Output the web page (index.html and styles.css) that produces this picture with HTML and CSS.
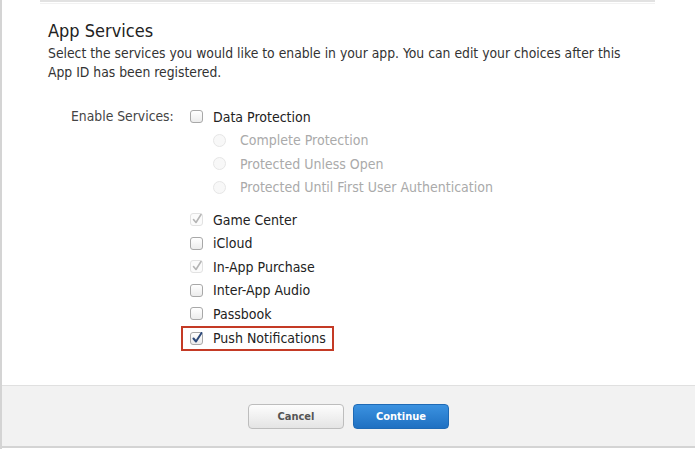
FILE: index.html
```html
<!DOCTYPE html>
<html lang="en">
<head>
    <meta charset="UTF-8">
    <title>App Services</title>
    <link rel="stylesheet" href="styles.css">
</head>
<body>
    <div class="panel">
        <div class="divider"></div>
        <div class="section">
            <h2 class="title">App Services</h2>
            <p class="intro">Select the services you would like to enable in your app. You can edit your choices after this App ID has been registered.</p>

            <div class="services">
                <div class="services-label">Enable Services:</div>
                <div class="options">
                    <div class="option"><span class="box"></span>Data Protection</div>
                    <div class="option sub"><span class="radio"></span>Complete Protection</div>
                    <div class="option sub"><span class="radio"></span>Protected Unless Open</div>
                    <div class="option sub"><span class="radio"></span>Protected Until First User Authentication</div>

                    <div class="option spaced"><span class="box locked"><svg viewBox="0 0 12 12"><path d="M2.5 6.5 L5 9.5 L10 1.5" /></svg></span>Game Center</div>
                    <div class="option"><span class="box"></span>iCloud</div>
                    <div class="option"><span class="box locked"><svg viewBox="0 0 12 12"><path d="M2.5 6.5 L5 9.5 L10 1.5" /></svg></span>In-App Purchase</div>
                    <div class="option"><span class="box"></span>Inter-App Audio</div>
                    <div class="option"><span class="box"></span>Passbook</div>
                    <div class="option highlight"><span class="box checked"><svg viewBox="0 0 12 12"><path d="M2.5 6.5 L5 9.5 L10.5 1" /></svg></span>Push Notifications</div>
                </div>
            </div>
        </div>
        <div class="footer">
            <button class="btn cancel">Cancel</button>
            <button class="btn continue">Continue</button>
        </div>
    </div>
</body>
</html>
```

FILE: styles.css
```css
body {
    margin: 0;
    background: #fff;
    font-family: "DejaVu Sans Condensed", "DejaVu Sans", sans-serif;
    color: #333;
}

.panel {
    height: 449px;
    border-left: 2px solid #d4d4d4;
    box-sizing: border-box;
    display: flex;
    flex-direction: column;
}

.divider {
    margin: 0 40px 0 38px;
    height: 1px;
    border-top: 2px solid #e2e2e2;
    border-bottom: 1px solid #f2f2f2;
}

.section {
    flex: 1;
    padding-left: 46px;
}

.title {
    margin: 15px 0 0;
    font-size: 18px;
    line-height: 24px;
    font-weight: normal;
    color: #222;
}

.intro {
    margin: 1px 0 0;
    width: 590px;
    font-size: 13.8px;
    line-height: 19px;
    color: #333;
}

.services {
    display: flex;
    margin-top: 23px;
    padding-left: 23px;
}

.services-label {
    width: 119px;
    font-size: 13.8px;
    line-height: 23.5px;
    color: #444;
}

.options {
    display: flex;
    flex-direction: column;
}

.option {
    display: flex;
    align-items: center;
    height: 23.5px;
    font-size: 14px;
    color: #222;
}

.option.sub {
    padding-left: 23px;
    color: #aaa;
}

.option.spaced {
    margin-top: 9px;
}

.box {
    width: 11px;
    height: 11px;
    border: 1px solid #a8a8a8;
    border-radius: 3px;
    background: linear-gradient(#fff, #ececec);
    margin-right: 10px;
    position: relative;
}

.box svg {
    position: absolute;
    left: 0;
    top: -1px;
    width: 12px;
    height: 12px;
}

.box svg path {
    fill: none;
    stroke-width: 1.6;
    stroke-linecap: round;
    stroke-linejoin: round;
}

.box.locked {
    border-color: #e2e2e2;
    background: #fbfbfb;
}

.box.locked svg path {
    stroke: #b5b5b5;
}

.box.checked svg path {
    stroke: #2d4a7a;
    stroke-width: 2;
}

.radio {
    width: 11px;
    height: 11px;
    border: 1px solid #e6e6e6;
    border-radius: 50%;
    background: #f8f8f8;
    margin-right: 14px;
}

.highlight {
    margin-left: -9px;
    padding-left: 7px;
    width: 142px;
    height: 21px;
    border: 2px solid #c43a25;
}

.footer {
    height: 63px;
    background: #f2f2f2;
    border-top: 1px solid #e0e0e0;
    border-bottom: 2px solid #d4d4d4;
    display: flex;
    justify-content: center;
    align-items: flex-start;
    gap: 9px;
    padding-top: 18px;
    box-sizing: border-box;
    margin-bottom: 1px;
}

.btn {
    width: 96px;
    height: 25px;
    border-radius: 4px;
    font-family: "DejaVu Sans Condensed", "DejaVu Sans", sans-serif;
    font-size: 11px;
    font-weight: bold;
    cursor: pointer;
}

.cancel {
    border: 1px solid #bdbdbd;
    background: linear-gradient(#fdfdfd, #e4e4e4);
    color: #555;
}

.continue {
    border: 1px solid #1f6ab5;
    background: linear-gradient(#3b92e0, #1f70c2);
    color: #fff;
}
```
